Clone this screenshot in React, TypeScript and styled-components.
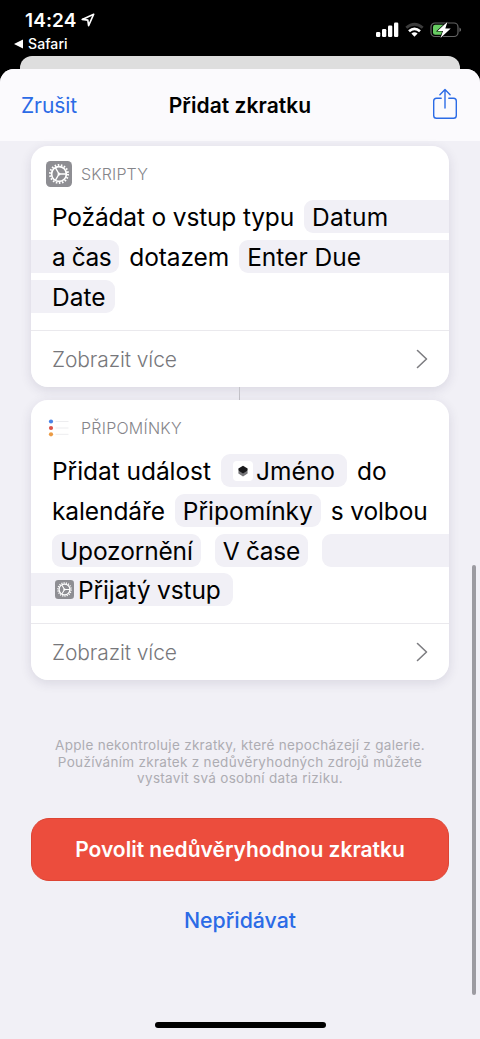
import React from "react";
import styled, { createGlobalStyle } from "styled-components";

const GlobalStyle = createGlobalStyle`
  * { box-sizing: border-box; }
  body { margin: 0; background: #000; font-family: Inter, "Liberation Sans", sans-serif; }
`;

const Screen = styled.div`
  position: relative;
  display: flex;
  flex-direction: column;
  width: 480px;
  height: 1039px;
  overflow: hidden;
  background: #000;
  color: #000;
`;

const StatusBar = styled.header`
  display: flex;
  justify-content: space-between;
  height: 56px;
  padding: 10px 19px 0 14px;
  color: #fff;
`;

const StatusLeft = styled.div`
  display: flex;
  flex-direction: column;
`;

const Clock = styled.div`
  display: flex;
  align-items: center;
  gap: 5px;
  height: 20px;
  padding-left: 11px;
  font-size: 19px;
  font-weight: 600;
  letter-spacing: 0.1px;
`;

const BackLink = styled.div`
  display: flex;
  align-items: center;
  gap: 5px;
  height: 17px;
  margin-top: 5px;
  font-size: 14px;
  font-weight: 500;
  letter-spacing: 0.1px;
`;

const StatusIcons = styled.div`
  display: flex;
  align-items: center;
  height: 40px;
`;

const BackSheet = styled.div`
  flex: none;
  height: 13px;
  margin: 0 20px;
  border-radius: 12px 12px 0 0;
  background: #dedede;
`;

const Sheet = styled.main`
  display: flex;
  flex: 1;
  flex-direction: column;
  border-radius: 14px 14px 0 0;
  overflow: hidden;
  background: #f1f0f6;
`;

const NavBar = styled.nav`
  display: grid;
  grid-template-columns: 1fr auto 1fr;
  align-items: center;
  flex: none;
  height: 72px;
  padding: 0 21px;
  background: #fbfafd;
`;

const NavAction = styled.button`
  justify-self: start;
  padding: 0;
  border: 0;
  background: none;
  color: #2b6be6;
  font: 400 21px Inter, sans-serif;
  letter-spacing: -0.1px;
`;

const NavTitle = styled.h1`
  margin: 0;
  font-size: 21px;
  font-weight: 600;
  letter-spacing: 0.05px;
`;

const ShareSlot = styled.div`
  justify-self: end;
  height: 34px;
  margin-right: 1px;
`;

const Content = styled.div`
  display: flex;
  flex: 1;
  flex-direction: column;
  align-items: stretch;
  padding: 5px 31px 0;
`;

const Card = styled.section<{ $height: number }>`
  display: flex;
  flex: none;
  flex-direction: column;
  height: ${(p) => p.$height}px;
  border-radius: 17px;
  overflow: hidden;
  background: #fff;
`;

const CardShadow = styled.div`
  border-radius: 17px;
  box-shadow: 0 3px 12px rgba(40, 35, 70, 0.12);
`;

const CardHeader = styled.div`
  display: flex;
  flex: none;
  align-items: center;
  gap: 9px;
  height: 54px;
  padding: 2px 15px 0;
  color: #85858a;
  font-size: 16px;
  font-weight: 300;
`;

const HeaderLabel = styled.span<{ $track: number }>`
  letter-spacing: ${(p) => p.$track}px;
`;

const Lines = styled.div`
  display: flex;
  flex: 1;
  flex-direction: column;
  gap: 6.8px;
`;

const Line = styled.div`
  display: flex;
  height: 33px;
  padding-left: 21px;
  font-size: 24.5px;
  line-height: 35px;
  white-space: nowrap;
`;

const Word = styled.span<{ $track?: number; $after?: number }>`
  margin-right: ${(p) => p.$after ?? 10}px;
  letter-spacing: ${(p) => p.$track ?? 0}px;
`;

const Token = styled.span<{
  $open?: "left" | "right";
  $track?: number;
  $after?: number;
  $end?: number;
}>`
  display: flex;
  align-items: center;
  flex: ${(p) => (p.$open === "right" ? "1" : "none")};
  height: 33px;
  margin-left: ${(p) => (p.$open === "left" ? "-21px" : "0")};
  margin-right: ${(p) => (p.$open === "right" ? 0 : p.$after ?? 10)}px;
  padding: 2px ${(p) => p.$end ?? 8}px 0 ${(p) => (p.$open === "left" ? "21px" : "8px")};
  border-radius: ${(p) =>
    p.$open === "left" ? "0 9px 9px 0" : p.$open === "right" ? "9px 0 0 9px" : "9px"};
  background: #f1f0f6;
  letter-spacing: ${(p) => p.$track ?? 0}px;
`;

const ShortcutTile = styled.span`
  display: flex;
  align-items: center;
  justify-content: center;
  width: 20px;
  height: 20px;
  margin: -2px 3px 0 4px;
  border-radius: 4px;
  background: #fff;
`;

const TokenIcon = styled.span`
  display: flex;
  margin: -3px 4px 0 3px;
`;

const CardFooter = styled.div`
  display: flex;
  flex: none;
  align-items: center;
  justify-content: space-between;
  height: 57px;
  padding: 0 21px;
  border-top: 1px solid #eae9ed;
  color: #77777b;
  font-size: 21px;
  font-weight: 300;
  letter-spacing: -0.1px;
`;

const Connector = styled.div`
  align-self: center;
  flex: none;
  width: 1px;
  height: 13px;
  margin-right: 1px;
  background: #c4c3c9;
`;

const Disclaimer = styled.p`
  margin: 57px 0 0;
  color: #adacb2;
  font-size: 13.5px;
  line-height: 16.7px;
  letter-spacing: 0.3px;
  text-align: center;
  white-space: nowrap;
`;

const AllowButton = styled.button`
  flex: none;
  height: 63px;
  margin-top: 31px;
  padding: 0;
  border: 1px solid #dd4433;
  border-radius: 18px;
  background: #ec4d3d;
  color: #fff;
  font: 600 21px Inter, sans-serif;
`;

const DeclineButton = styled.button`
  align-self: center;
  height: 30px;
  margin-top: 24px;
  padding: 0;
  border: 0;
  background: none;
  color: #2b6be6;
  font: 500 21.3px Inter, sans-serif;
`;

const HomeIndicator = styled.div`
  position: absolute;
  left: 155px;
  bottom: 11px;
  width: 171px;
  height: 6px;
  border-radius: 3px;
  background: #000;
`;

const ScrollThumb = styled.div`
  position: absolute;
  top: 565px;
  right: 4px;
  width: 4px;
  height: 430px;
  border-radius: 2px;
  background: #9c9ba1;
`;

const GearIcon = ({ size }: { size: number }) => (
  <svg width={size} height={size} viewBox="0 0 26 26">
    <rect width="26" height="26" rx="4.5" fill="#8e8e93" />
    <g fill="none" stroke="#fff">
      <circle cx="13" cy="13" r="7.4" strokeWidth="1.7" />
      <circle cx="13" cy="13" r="9" strokeWidth="2" strokeDasharray="1.57 1.572" />
      <path d="M13 13h7.300M13 13 9.400 6.700M13 13l-3.600 6.300" strokeWidth="1.400" />
    </g>
    <circle cx="13" cy="13" r="1.500" fill="#fff" />
  </svg>
);

const RemindersIcon = () => (
  <svg width="26" height="26" viewBox="0 0 26 26">
    <circle cx="5" cy="6.5" r="2.1" fill="#4a83e6" />
    <circle cx="5" cy="13" r="2.1" fill="#dc5248" />
    <circle cx="5" cy="19.3" r="2.1" fill="#eb9b45" />
    <path d="M9.5 6.5H22.5M9.5 13H22.5M9.5 19.3H22.5" stroke="#ededef" strokeWidth="1" />
  </svg>
);

const LayersIcon = () => (
  <svg width="10" height="12" viewBox="0 0 10 12">
    <path d="M5 3.8 9.6 6.2V8.4L5 11.4.4 8.4V6.2z" fill="#77777a" />
    <path d="M5 .8 9.6 3.4V5.6L5 8.4.4 5.6V3.4z" fill="#19191b" />
  </svg>
);

const ShareIcon = () => (
  <svg width="26" height="34" viewBox="0 0 26 34" fill="none" stroke="#2b6be6" strokeWidth="1.4" strokeLinecap="round" strokeLinejoin="round">
    <path d="M9.200 10.200H4.500Q1.700 10.200 1.700 13V27.500Q1.700 30.300 4.500 30.300H21.500Q24.300 30.300 24.300 27.500V13Q24.300 10.200 21.500 10.200H16.800" />
    <path d="M13 20V2M7.900 6.700 13 1.600 18.100 6.700" />
  </svg>
);

const Chevron = () => (
  <svg width="12" height="20" viewBox="0 0 12 20" fill="none" stroke="#7d7d81" strokeWidth="1.6" strokeLinecap="round" strokeLinejoin="round">
    <path d="M1.500 1.500 10.500 10 1.500 18.500" />
  </svg>
);

const LocationIcon = () => (
  <svg width="14" height="14" viewBox="0 0 14 14" fill="none" stroke="#fff" strokeWidth="1.6" strokeLinejoin="round">
    <path d="M12.700 1.200 1.200 6.400 6.800 7.100 7.600 12.600z" />
  </svg>
);

const BackTriangle = () => (
  <svg width="9" height="10" viewBox="0 0 9 10">
    <path d="M0 5 9 .5V9.500z" fill="#fff" />
  </svg>
);

const StatusGlyphs = () => (
  <svg width="86" height="20" viewBox="0 0 86 20">
    <g fill="#fff">
      <rect x="1" y="12" width="4.300" height="5" rx="1.200" />
      <rect x="7" y="9" width="4.300" height="8" rx="1.200" />
      <rect x="13" y="5.500" width="4.300" height="11.500" rx="1.200" />
      <rect x="19" y="2.500" width="4.300" height="14.500" rx="1.200" />
      <path d="M39.500 16.700 36.400 13.600Q39.500 11 42.600 13.600z" />
    </g>
    <g fill="none">
      <path d="M31.300 7.800Q39.500 .7 47.700 7.800" stroke="#3c3c3c" strokeWidth="2.800" />
      <path d="M34 11.300Q39.500 6.400 45 11.300" stroke="#fff" strokeWidth="2.700" />
      <rect x="56" y="3" width="27" height="13.500" rx="4" stroke="#656565" strokeWidth="1.200" />
    </g>
    <path d="M84.500 7.500Q87.500 9.700 84.500 12z" fill="#777" />
    <rect x="58" y="4.800" width="12" height="10" rx="2.200" fill="#67cc62" />
    <path d="M72.500 1.700 62.500 11H68L65.500 18 75.700 8.500H70.300z" fill="#fff" stroke="#000" strokeWidth="1.200" paintOrder="stroke" />
  </svg>
);

const MoreRow = () => (
  <CardFooter>
    <span>Zobrazit více</span>
    <Chevron />
  </CardFooter>
);

export default function App() {
  return (
    <Screen>
      <GlobalStyle />
      <StatusBar>
        <StatusLeft>
          <Clock>
            14:24
            <LocationIcon />
          </Clock>
          <BackLink>
            <BackTriangle />
            Safari
          </BackLink>
        </StatusLeft>
        <StatusIcons>
          <StatusGlyphs />
        </StatusIcons>
      </StatusBar>
      <BackSheet />
      <Sheet>
        <NavBar>
          <NavAction>Zrušit</NavAction>
          <NavTitle>Přidat zkratku</NavTitle>
          <ShareSlot>
            <ShareIcon />
          </ShareSlot>
        </NavBar>
        <Content>
          <CardShadow>
            <Card $height={241}>
              <CardHeader>
                <GearIcon size={26} />
                <HeaderLabel $track={0.15}>SKRIPTY</HeaderLabel>
              </CardHeader>
              <Lines>
                <Line>
                  <Word $track={-0.16}>Požádat o vstup typu</Word>
                  <Token $open="right" $track={0.2}>Datum</Token>
                </Line>
                <Line>
                  <Token $open="left" $track={-0.45}>a čas</Token>
                  <Word $track={-0.1}>dotazem</Word>
                  <Token $open="right">Enter Due</Token>
                </Line>
                <Line>
                  <Token $open="left" $end={9}>Date</Token>
                </Line>
              </Lines>
              <MoreRow />
            </Card>
          </CardShadow>
          <Connector />
          <CardShadow>
            <Card $height={280}>
              <CardHeader>
                <RemindersIcon />
                <HeaderLabel $track={0.25}>PŘIPOMÍNKY</HeaderLabel>
              </CardHeader>
              <Lines>
                <Line>
                  <Word $track={-0.05}>Přidat událost</Word>
                  <Token $end={12}>
                    <ShortcutTile>
                      <LayersIcon />
                    </ShortcutTile>
                    Jméno
                  </Token>
                  <Word>do</Word>
                </Line>
                <Line>
                  <Word $track={-0.1}>kalendáře</Word>
                  <Token>Připomínky</Token>
                  <Word $track={-0.15}>s volbou</Word>
                </Line>
                <Line>
                  <Token $after={14} $track={-0.15}>Upozornění</Token>
                  <Token $after={14} $track={-0.3}>V čase</Token>
                  <Token $open="right" />
                </Line>
                <Line>
                  <Token $open="left" $end={12} $track={-0.12}>
                    <TokenIcon>
                      <GearIcon size={19} />
                    </TokenIcon>
                    Přijatý vstup
                  </Token>
                </Line>
              </Lines>
              <MoreRow />
            </Card>
          </CardShadow>
          <Disclaimer>
            Apple nekontroluje zkratky, které nepocházejí z galerie.
            <br />
            Používáním zkratek z nedůvěryhodných zdrojů můžete
            <br />
            vystavit svá osobní data riziku.
          </Disclaimer>
          <AllowButton>Povolit nedůvěryhodnou zkratku</AllowButton>
          <DeclineButton>Nepřidávat</DeclineButton>
        </Content>
      </Sheet>
      <ScrollThumb />
      <HomeIndicator />
    </Screen>
  );
}
